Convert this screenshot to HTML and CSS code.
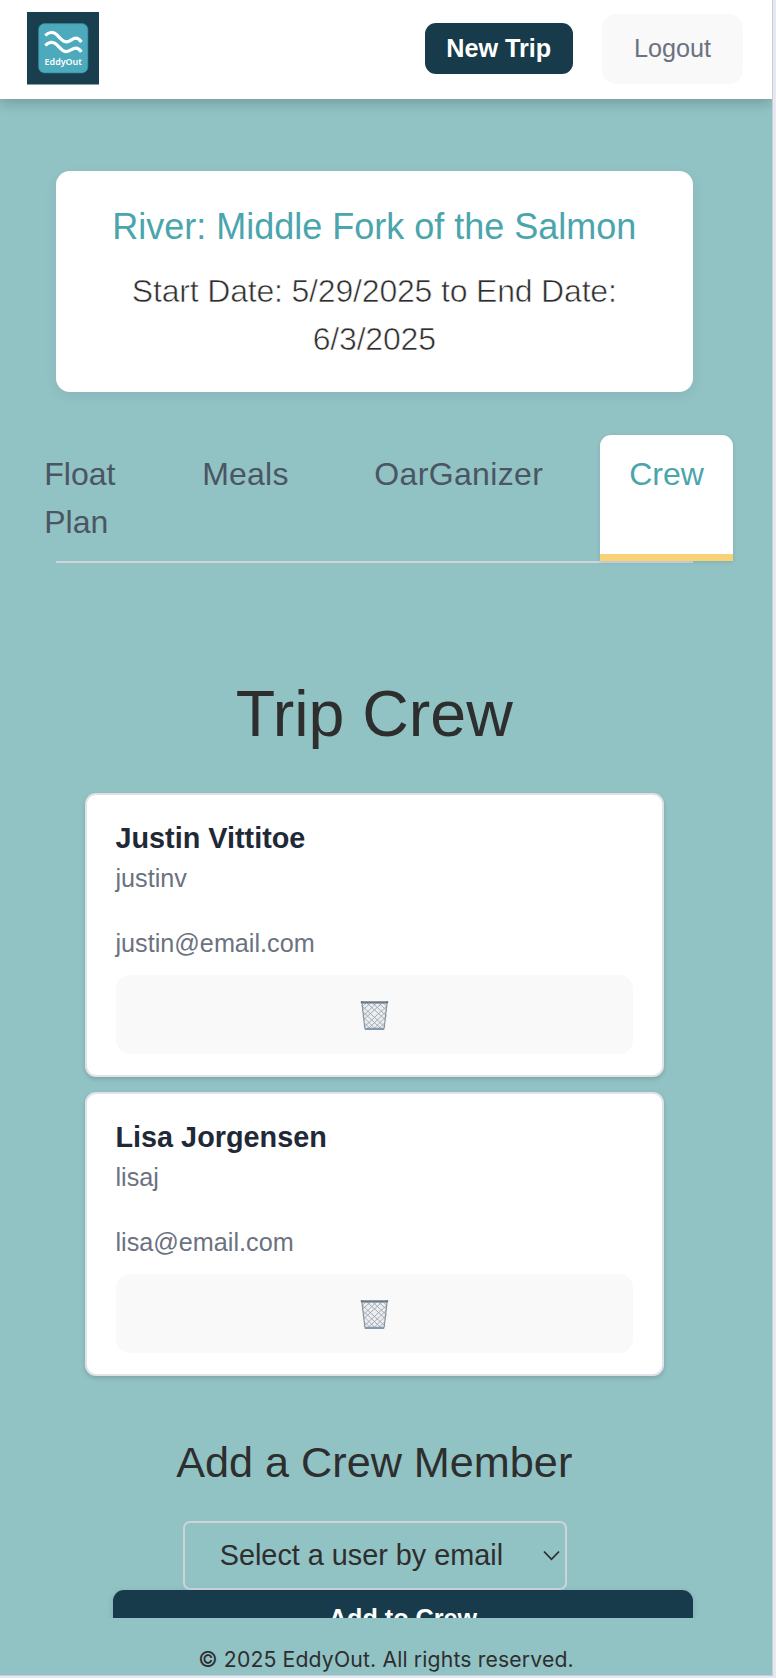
FILE: index.html
```html
<!DOCTYPE html>
<html lang="en">
<head>
<meta charset="utf-8">
<title>EddyOut</title>
<link rel="stylesheet" href="styles.css">
</head>
<body>
<div class="app">
  <header class="header">
    <svg class="logo" viewBox="0 0 72 72" role="img" aria-label="EddyOut">
      <rect width="72" height="72" fill="#193e4e"/>
      <rect x="11.5" y="11.5" width="49" height="49" rx="6" fill="#4daabd" stroke="#32899b" stroke-width=".7"/>
      <g fill="none" stroke="#fff" stroke-width="3.2">
        <path d="M18.2 23.400C21 20 26 19 29.500 22.500C33 26 36 30 39.500 29.700C43.500 29.400 45 26 48.500 26C51 26 52.500 27.500 54 29.800"/>
        <path d="M18.200 33.200C21 29.800 26 28.800 29.500 32.300C33 35.800 35 39.300 39 39.300C43 39.300 45 35.800 48.500 35.800C51 35.800 52.500 37.300 54 39.600"/>
      </g>
      <text x="36" y="52.600" class="logo-text" textLength="37" lengthAdjust="spacingAndGlyphs">EddyOut</text>
    </svg>
    <div class="actions">
      <button class="btn new-trip">New Trip</button>
      <button class="btn logout">Logout</button>
    </div>
  </header>
  <main class="content">
    <section class="trip">
      <h2 class="river">River: Middle Fork of the Salmon</h2>
      <p class="dates">Start Date: 5/29/2025 to End Date:<br>6/3/2025</p>
    </section>
    <nav class="tabs">
      <a class="tab float">Float Plan</a>
      <a class="tab meals">Meals</a>
      <a class="tab oar">OarGanizer</a>
      <a class="tab active">Crew</a>
    </nav>
    <h1 class="title">Trip Crew</h1>
    <div class="crew">
      <article class="member">
        <h3 class="name">Justin Vittitoe</h3>
        <p class="user">justinv</p>
        <p class="email">justin@email.com</p>
        <button class="btn remove" aria-label="Remove">
          <svg class="bin" viewBox="0 0 30 32">
            <path d="M2 3L5 30H25L28 3Z" fill="#eceff1"/>
            <path class="mesh" d="M3 7L26 28M3 12L22 30M4 18L16 30M5 24L11 30M7 3L27 21M13 3L28 17M19 3L28 11M24 3L28 7M27 7L4 28M27 12L8 30M26 18L14 30M25 24L19 30M23 3L3 21M17 3L3 17M11 3L2 11M6 3L2 7"/>
            <path d="M2 3L5 29M28 3L25 29" stroke="#8b949c" stroke-width="1.200"/>
            <rect x=".7" y="1" width="28.600" height="2.600" rx="1.200" fill="#65727d"/>
            <path d="M2.500 1.700H27.500" stroke="#a6b5c2" stroke-width=".8"/>
            <path d="M4.700 28.600H25.300L25 31H5Z" fill="#8498ab"/>
          </svg>
        </button>
      </article>
      <article class="member">
        <h3 class="name">Lisa Jorgensen</h3>
        <p class="user">lisaj</p>
        <p class="email">lisa@email.com</p>
        <button class="btn remove" aria-label="Remove">
          <svg class="bin" viewBox="0 0 30 32">
            <path d="M2 3L5 30H25L28 3Z" fill="#eceff1"/>
            <path class="mesh" d="M3 7L26 28M3 12L22 30M4 18L16 30M5 24L11 30M7 3L27 21M13 3L28 17M19 3L28 11M24 3L28 7M27 7L4 28M27 12L8 30M26 18L14 30M25 24L19 30M23 3L3 21M17 3L3 17M11 3L2 11M6 3L2 7"/>
            <path d="M2 3L5 29M28 3L25 29" stroke="#8b949c" stroke-width="1.200"/>
            <rect x=".7" y="1" width="28.600" height="2.600" rx="1.200" fill="#65727d"/>
            <path d="M2.500 1.700H27.500" stroke="#a6b5c2" stroke-width=".8"/>
            <path d="M4.700 28.600H25.300L25 31H5Z" fill="#8498ab"/>
          </svg>
        </button>
      </article>
    </div>
    <h2 class="add-title">Add a Crew Member</h2>
    <div class="select">
      <span>Select a user by email</span>
      <svg class="chevron" viewBox="0 0 17 11"><path d="M1 1.500L8.500 9.300L16 1.500"/></svg>
    </div>
    <button class="btn add">Add to Crew</button>
  </main>
  <footer class="footer">© 2025 EddyOut. All rights reserved.</footer>
</div>
</body>
</html>
```
FILE: styles.css
```css
* { box-sizing: border-box; }
html { background: #e6e9f0; }
body { margin: 0; font-family: "Liberation Sans", Arial, sans-serif; color: #2e2e2e; }
h1, h2, h3, p { margin: 0; font-weight: 400; }
.app {
  width: 773px; height: 1676px; background: #91c2c4;
  border-right: 1px solid #c9ccd4; border-bottom: 1px solid #c9ccd4;
  display: flex; flex-direction: column; overflow: hidden;
}
.btn { border: 0; font-family: inherit; margin: 0; padding: 0; display: block; }
.header {
  height: 98.500px; flex: none; background: #fff; padding: 0 29px 0 26.500px;
  display: flex; justify-content: space-between; align-items: flex-start;
  box-shadow: 0 4px 12px rgba(0, 0, 0, .2);
}
.logo { width: 72.500px; height: 72.500px; margin-top: 12.200px; }
.logo-text { fill: #fff; font: 600 9.600px "Noto Sans", sans-serif; text-anchor: middle; }
.actions { display: flex; gap: 29px; align-items: center; margin-top: 13.500px; }
.new-trip {
  width: 148.500px; height: 50.500px; border-radius: 11px; background: #183b4b;
  color: #fff; font-size: 25.200px; font-weight: 700;
}
.logout { width: 141px; height: 70px; border-radius: 14px; background: #f9f9f9; color: #6b7280; font-size: 25.200px; }
.content {
  height: 1519.500px; flex: none; padding: 72px 79px 0 55.500px; overflow: hidden;
  display: flex; flex-direction: column;
}
.trip {
  flex: none; height: 221.500px; padding: 29.500px 20px; border-radius: 14px; background: #fff;
  text-align: center; box-shadow: 0 4px 14px rgba(0, 0, 0, .06);
}
.river { font-size: 36px; line-height: 54px; color: #4aa5ac; white-space: nowrap; }
.dates {
  margin-top: 12.500px; font-size: 32px; line-height: 48px; letter-spacing: -.18px;
  white-space: nowrap; -webkit-text-stroke: .6px #fff;
}
.tabs {
  flex: none; height: 128px; margin-top: 43px; border-bottom: 2px solid #d1d5db;
  display: flex; justify-content: center; gap: 29px;
}
.tab { flex: none; padding: 14.500px 29px 0; font-size: 32px; line-height: 48px; color: #4b5563; }
.float { width: 129px; }
.meals { width: 143px; letter-spacing: .2px; }
.oar { width: 226px; letter-spacing: .35px; }
.active {
  width: 133px; background: #fff; color: #4aa5ac; border-bottom: 7px solid #f9d177;
  border-radius: 11px 11px 0 0; box-shadow: 0 1px 4px rgba(0, 0, 0, .1);
}
.title { flex: none; margin-top: 103px; font-size: 64.500px; line-height: 96px; text-align: center; }
.crew { flex: none; margin: 30.500px 29.500px 0 29px; display: flex; flex-direction: column; gap: 14.500px; }
.member {
  height: 284.500px; padding: 25px 29px 0; background: #fff; border: 2px solid #dfe2e6;
  border-radius: 11px; box-shadow: 0 2px 4px rgba(0, 0, 0, .15);
}
.name { font-size: 28.800px; line-height: 36px; font-weight: 700; color: #1f2937; }
.user { margin-top: 4px; font-size: 25.200px; line-height: 36px; color: #6b7280; }
.email { margin-top: 29px; font-size: 25.200px; line-height: 36px; color: #6b7280; }
.remove {
  width: 100%; height: 79px; margin-top: 14px; padding: 2px 0 0 1px; border-radius: 14px; background: #f9f9f9;
  display: flex; align-items: center; justify-content: center;
}
.bin { width: 29px; height: 31px; }
.mesh { stroke: #9aa2aa; stroke-width: .9; }
.add-title { flex: none; margin-top: 53.500px; font-size: 43.200px; line-height: 65px; text-align: center; }
.select {
  flex: none; align-self: center; width: 384px; height: 69px; margin: 26px 0 0 1px;
  border: 2px solid #ced3d9; border-radius: 7px; padding: 1px 5px 0 35px;
  display: flex; align-items: center; justify-content: space-between; font-size: 28.800px;
}
.chevron { width: 17px; height: 11px; margin-bottom: 1px; fill: none; stroke: #2e2e2e; stroke-width: 1.800; }
.add {
  flex: none; align-self: flex-end; width: 580px; height: 57px; border-radius: 11px;
  background: #183b4b; color: #fff; font-size: 25.200px; font-weight: 700;
  box-shadow: 0 2px 6px rgba(0, 0, 0, .12);
}
.footer {
  flex: 1; padding-top: 23.500px; font: 400 21.200px/34px Inter, sans-serif;
  letter-spacing: .15px; text-align: center;
}
```
